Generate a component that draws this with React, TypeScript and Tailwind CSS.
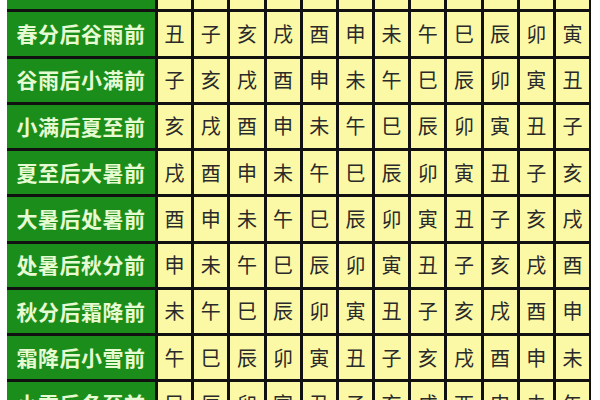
const rows: [string, string][] = [
  ["惊蛰后春分前", "寅丑子亥戌酉申未午巳辰卯"],
  ["春分后谷雨前", "丑子亥戌酉申未午巳辰卯寅"],
  ["谷雨后小满前", "子亥戌酉申未午巳辰卯寅丑"],
  ["小满后夏至前", "亥戌酉申未午巳辰卯寅丑子"],
  ["夏至后大暑前", "戌酉申未午巳辰卯寅丑子亥"],
  ["大暑后处暑前", "酉申未午巳辰卯寅丑子亥戌"],
  ["处暑后秋分前", "申未午巳辰卯寅丑子亥戌酉"],
  ["秋分后霜降前", "未午巳辰卯寅丑子亥戌酉申"],
  ["霜降后小雪前", "午巳辰卯寅丑子亥戌酉申未"],
  ["小雪后冬至前", "巳辰卯寅丑子亥戌酉申未午"],
];

export default function App() {
  return (
    <div
      className="w-[600px] h-[400px] overflow-hidden bg-white pl-[7px]"
      style={{ fontFamily: '"Noto Sans CJK SC", "Noto Sans", sans-serif' }}
    >
      <div className="-mt-[34px] w-[584px] bg-[#111] pr-[2px] grid grid-cols-[148px_repeat(12,1fr)] gap-[3px] auto-rows-[43.25px]">
        {rows.map(([label, cells]) => (
          <div key={label} className="contents">
            <div className="bg-[#1b8d1b] text-[#e6fbd2] font-bold text-[21px] flex items-center justify-center tracking-[0.5px]">
              {label}
            </div>
            {cells.split("").map((c, i) => (
              <div
                key={i}
                className="bg-[#fcf9a6] text-[#2a2a2a] text-[20px] flex items-center justify-center"
              >
                {c}
              </div>
            ))}
          </div>
        ))}
      </div>
    </div>
  );
}
